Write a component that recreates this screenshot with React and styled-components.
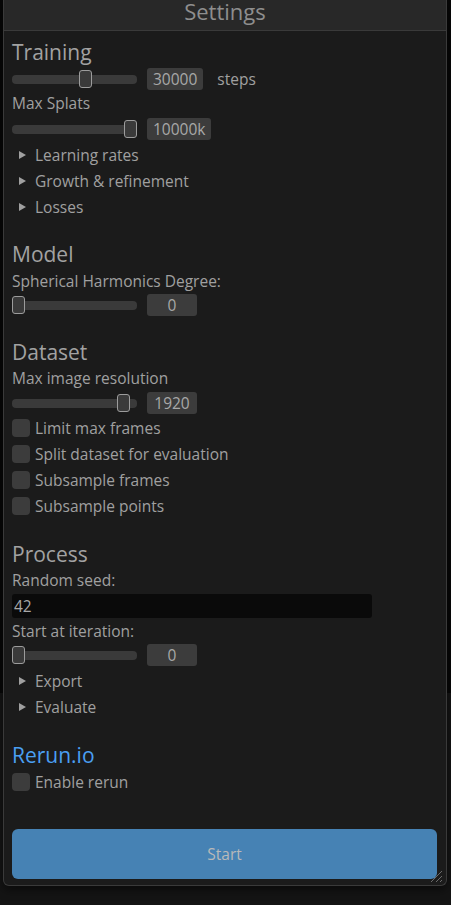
import React from 'react';
import styled, { createGlobalStyle } from 'styled-components';

const Global = createGlobalStyle`
  html, body { margin: 0; padding: 0; background: #0d0d0d; }
  body { font-family: "Open Sans", "Noto Sans", sans-serif; }
`;

const Page = styled.div`
  height: 905px;
  overflow: hidden;
  padding-left: 3px;
  box-sizing: border-box;
  background: linear-gradient(to bottom, #070707 0, #070707 693px, #141414 693px);
`;

const Window = styled.div`
  position: relative;
  width: 444px;
  box-sizing: border-box;
  background: #1b1b1b;
  border: 1px solid #3a3a3a;
  border-top: none;
  border-radius: 0 0 6px 6px;
  box-shadow: 0 4px 10px rgba(0, 0, 0, 0.5);
`;

const TitleBar = styled.div`
  height: 31px;
  box-sizing: border-box;
  padding-top: 1px;
  background: #282828;
  border-bottom: 1px solid #3a3a3a;
  display: flex;
  justify-content: center;
  font-size: 22px;
  line-height: 20px;
  color: #8e8e8e;
  font-weight: 400;
`;

const Body = styled.div`
  padding: 9px 9px 6px 8px;
  display: flex;
  flex-direction: column;
`;

const Heading = styled.h2`
  margin: ${(p) => p.$mt || 0}px 0 0;
  height: 24px;
  line-height: 24px;
  font-size: 21px;
  font-weight: 400;
  color: ${(p) => (p.$accent ? '#4a9ff2' : '#a2a2a2')};
`;

const Label = styled.div`
  margin-top: ${(p) => p.$mt || 0}px;
  height: 18px;
  line-height: 18px;
  font-size: 15.5px;
  color: #a0a0a0;
`;

const SliderRow = styled.div`
  margin-top: ${(p) => p.$mt || 0}px;
  height: 22px;
  display: flex;
  align-items: center;
`;

const Rail = styled.div`
  position: relative;
  width: 125px;
  height: 9px;
  border-radius: 4px;
  background: #3a3a3a;
`;

const Handle = styled.div`
  position: absolute;
  top: 50%;
  width: 13px;
  height: 18px;
  margin-top: -9px;
  box-sizing: border-box;
  border: 1px solid #9c9c9c;
  border-radius: 3px;
  background: #3a3a3a;
`;

const ValueBox = styled.div`
  margin-left: 10px;
  min-width: 50px;
  height: 22px;
  padding: 0 6px;
  box-sizing: border-box;
  background: #3c3c3c;
  border-radius: 3px;
  display: flex;
  align-items: center;
  justify-content: center;
  font-size: 15.5px;
  color: #a8a8a8;
`;

const Unit = styled.span`
  margin-left: 14px;
  font-size: 15.5px;
  color: #a0a0a0;
`;

const CollapseRow = styled.div`
  margin-top: ${(p) => p.$mt || 0}px;
  height: 26px;
  display: flex;
  align-items: center;
  padding-left: 7px;
  font-size: 15.5px;
  color: #a0a0a0;
  gap: 9px;
`;

const CheckRow = styled.label`
  margin-top: ${(p) => p.$mt || 0}px;
  height: 26px;
  display: flex;
  align-items: center;
  gap: 5px;
  font-size: 15.5px;
  color: #a0a0a0;
`;

const Box = styled.span`
  width: 18px;
  height: 18px;
  border-radius: 4px;
  background: #3c3c3c;
`;

const TextInput = styled.div`
  margin-top: ${(p) => p.$mt || 0}px;
  width: 360px;
  height: 24px;
  box-sizing: border-box;
  background: #0a0a0a;
  border-radius: 3px;
  padding-left: 2px;
  display: flex;
  align-items: center;
  font-size: 15.5px;
  color: #a8a8a8;
`;

const StartButton = styled.button`
  margin-top: ${(p) => p.$mt || 0}px;
  width: 425px;
  height: 50px;
  border: none;
  border-radius: 6px;
  background: #4682b4;
  color: #b9b9b9;
  font-family: inherit;
  font-size: 15.5px;
  padding: 0;
`;

const Grip = styled.svg`
  position: absolute;
  right: 3px;
  bottom: 2px;
`;

function Slider({ frac, value, unit, mt }) {
  return (
    <SliderRow $mt={mt}>
      <Rail>
        <Handle style={{ left: `${frac * 112}px` }} />
      </Rail>
      <ValueBox>{value}</ValueBox>
      {unit && <Unit>{unit}</Unit>}
    </SliderRow>
  );
}

function Collapse({ children, mt }) {
  return (
    <CollapseRow $mt={mt}>
      <svg width="7" height="8" viewBox="0 0 7 8">
        <path d="M0 0 L7 4 L0 8 Z" fill="#a0a0a0" />
      </svg>
      <span>{children}</span>
    </CollapseRow>
  );
}

function Check({ children, mt }) {
  return (
    <CheckRow $mt={mt}>
      <Box />
      <span>{children}</span>
    </CheckRow>
  );
}

export default function App() {
  return (
    <>
      <Global />
      <Page>
        <Window>
          <TitleBar>Settings</TitleBar>
          <Body>
            <Heading>Training</Heading>
            <Slider mt={4} frac={0.6} value="30000" unit="steps" />
            <Label $mt={4}>Max Splats</Label>
            <Slider mt={6} frac={1} value="10000k" />
            <Collapse mt={2}>Learning rates</Collapse>
            <Collapse>Growth &amp; refinement</Collapse>
            <Collapse>Losses</Collapse>

            <Heading $mt={22}>Model</Heading>
            <Label $mt={6}>Spherical Harmonics Degree:</Label>
            <Slider mt={4} frac={0} value="0" />

            <Heading $mt={24}>Dataset</Heading>
            <Label $mt={5}>Max image resolution</Label>
            <Slider mt={5} frac={0.9375} value="1920" />
            <Check mt={1}>Limit max frames</Check>
            <Check>Split dataset for evaluation</Check>
            <Check>Subsample frames</Check>
            <Check>Subsample points</Check>

            <Heading $mt={23}>Process</Heading>
            <Label $mt={5}>Random seed:</Label>
            <TextInput $mt={5}>42</TextInput>
            <Label $mt={4}>Start at iteration:</Label>
            <Slider mt={4} frac={0} value="0" />
            <Collapse mt={2}>Export</Collapse>
            <Collapse>Evaluate</Collapse>

            <Heading $mt={23} $accent>Rerun.io</Heading>
            <Check mt={2}>Enable rerun</Check>

            <StartButton $mt={34}>Start</StartButton>
          </Body>
          <Grip width="14" height="14" viewBox="0 0 14 14">
            <path d="M13 2 L2 13 M13 7 L7 13 M13 11 L11 13" stroke="#6a6a6a" strokeWidth="1" />
          </Grip>
        </Window>
      </Page>
    </>
  );
}
